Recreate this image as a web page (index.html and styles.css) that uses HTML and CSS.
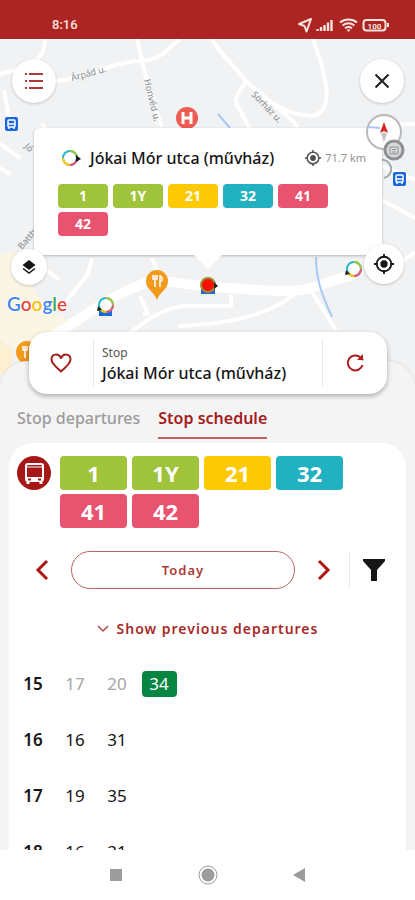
FILE: index.html
```html
<!DOCTYPE html>
<html lang="en">
<head>
    <meta charset="UTF-8">
    <meta name="viewport" content="width=device-width, initial-scale=1.0">
    <title>Stop schedule</title>
    <link rel="stylesheet" href="styles.css">
</head>
<body>
    <header class="status-bar">
        <span class="clock">8:16</span>
        <svg class="status-icons" width="94" height="16" viewBox="0 0 94 16" fill="none" stroke="#fbe3df" stroke-width="2">
            <path d="M14 2L2 7l5.500 2 2 5.500z" stroke-linejoin="round"/>
            <path d="M20.500 14v-2M24 14v-4M27.500 14V8M31 14V5.500M34.500 14V3" stroke-width="2.400"/>
            <path d="M43 5.500c5-4 12-4 17 0M45.500 8.500c4-3 8-3 12 0M48 11.200c2-1.500 5-1.500 7 0"/>
            <path d="M49.500 12.500h4L51.500 15z" fill="#fbe3df" stroke="none"/>
            <rect x="66.500" y="3" width="22" height="10.500" rx="3"/>
            <path d="M91 6v4"/>
            <text class="battery-text" x="77.500" y="11.500" text-anchor="middle">100</text>
        </svg>
    </header>

    <main class="app">
        <section class="map">
            <svg class="map-tiles" viewBox="0 39 415 350" preserveAspectRatio="xMidYMid slice">
                <rect y="39" width="415" height="350" fill="#f0f2f4"/>
                <path d="M0 254l14-3 14 30 22 32 24 8-34 30-8 10-32-22z" fill="#fbf6e3"/>
                <path d="M0 339l14 12-4 20-10 4z" fill="#fdf0d2"/>
                <!-- streets -->
                <g fill="none" stroke="#fff" stroke-width="4" stroke-linejoin="round">
                    <path d="M45 39c0 14-5 18-14 27L0 74M42 124l10 16M4 90l6 34"/>
                    <path d="M56 81c30-2 54-20 92-21 16-3 20-12 32-21M137 39l10 42 15 46"/>
                    <path d="M212 39c10 18 22 26 34 42 16 18 35 25 52 46M246 81c-8 14-12 15-9 24l13 24"/>
                    <path d="M246 81c22 20 36 33 66 35 18-3 16-26 12-40-3-18-7-24-11-37"/>
                    <path d="M0 144l20 14M0 168l10 6M382 125l33-1M382 166l33 14M382 200l33 18"/>
                    <path d="M394 268l21-16M42 266l17 14M92 258l-4 16-24 30M152 258l5 12"/>
                    <path d="M140 296l8 18h-5M129 334c20-17 40-29 60-28h42V294M178 326c50-2 90-10 118-33M312 292l24 38"/>
                    <path d="M42 343l28-18c30-20 52-34 76-42 22-4 36 2 60 3 30 3 60 5 88 5 26-2 35-12 60-16" stroke-width="10"/>
                </g>
                <path d="M218 114l12 14M316 257c0 18 3 32 16 60" fill="none" stroke="#a9c8f5" stroke-width="2"/>
                <g class="street-name">
                    <text x="72" y="81" transform="rotate(-15 72 81)">Árpád u.</text>
                    <text x="144" y="80" transform="rotate(76 144 80)">Honvéd u.</text>
                    <text x="251" y="95" transform="rotate(46 251 95)">Sörház u.</text>
                    <text x="22" y="250" transform="rotate(-50 22 250)">Batthyány</text>
                    <text x="24" y="147" transform="rotate(45 24 147)">Jó</text>
                </g>
                <!-- places -->
                <circle cx="187" cy="118" r="11" fill="#ee5c54"/>
                <path d="M183 112v12M191 112v12M183 118h8" stroke="#fff" stroke-width="3"/>
                <g id="bus-pin">
                    <rect x="5" y="117" width="13" height="14" rx="2" fill="#1a66dc"/>
                    <rect x="8" y="120" width="7" height="7" rx="1" fill="none" stroke="#fff" stroke-width="1.500"/>
                    <path d="M8 124h7M9 127v2M14 127v2" stroke="#fff" stroke-width="1.500"/>
                </g>
                <use href="#bus-pin" x="388" y="55"/>
                <g id="food-pin">
                    <path d="M157 300c-3-9-11-10-11-19a11 11 0 0 1 22 0c0 9-8 10-11 19z" fill="#f29a1c"/>
                    <path d="M153 275v4h4v-4M155 275v12M160 275v12M160 276c3 1 3 5 0 6" fill="none" stroke="#fff" stroke-width="1.500"/>
                </g>
                <use href="#food-pin" x="-130" y="71"/>
                <!-- stops -->
                <path d="M99 307h13v9H99z" fill="#1a66dc"/>
                <g id="stop-ring" fill="none" stroke-width="2">
                    <circle cx="106" cy="305" r="7" fill="#fff" stroke="#2bb5c8"/>
                    <path d="M106 298a7 7 0 0 1 7 7" stroke="#a4c639"/>
                    <path d="M113 305a7 7 0 0 1-7 7" stroke="#ec5574"/>
                    <path d="M106 312a7 7 0 0 1-6-3.500" stroke="#fdc800"/>
                    <path d="M97 311l1-5 4 4z" fill="#222" stroke="none"/>
                </g>
                <use href="#stop-ring" x="248" y="-36"/>
                <path d="M201 286h14v8h-14z" fill="#1a66dc"/>
                <circle cx="208" cy="285" r="7" fill="#f51008" stroke="#a28c28" stroke-width="2"/>
                <path d="M214 282l4 4-4 3z" fill="#222"/>
                <path d="M380 160a9 9 0 0 1 4 18" fill="none" stroke="#a5a8ab" stroke-width="2"/>
                <text class="google" x="7" y="311"><tspan fill="#4285f4">G</tspan><tspan fill="#ea4335">o</tspan><tspan fill="#fbbc05">o</tspan><tspan fill="#4285f4">g</tspan><tspan fill="#34a853">l</tspan><tspan fill="#ea4335">e</tspan></text>
            </svg>

            <div class="popup">
                <div class="popup-title">
                    <svg width="20" height="18" viewBox="0 0 20 18" fill="none" stroke-width="2">
                        <circle cx="8" cy="9" r="7" stroke="#2bb5c8"/>
                        <path d="M8 2a7 7 0 0 1 7 7" stroke="#a4c639"/>
                        <path d="M15 9a7 7 0 0 1-7 7" stroke="#ec5574"/>
                        <path d="M8 16a7 7 0 0 1-7-7" stroke="#fdc800"/>
                        <path d="M14 6l5 4-5 3z" fill="#1b1b1b"/>
                    </svg>
                    <h2 class="stop-name">Jókai Mór utca (művház)</h2>
                    <span class="distance">
                        <svg width="16" height="16" viewBox="0 0 22 22" opacity=".75"><use href="#locate"/></svg>
                        71.7 km
                    </span>
                </div>
                <div class="lines">
                    <span class="line green">1</span>
                    <span class="line green">1Y</span>
                    <span class="line yellow">21</span>
                    <span class="line teal">32</span>
                    <span class="line pink">41</span>
                    <span class="line pink">42</span>
                </div>
            </div>

            <button class="map-btn list-btn" aria-label="List">
                <svg width="20" height="18" viewBox="0 0 20 18" stroke="#b03a38" stroke-width="2"><path d="M5 2h14M5 9h14M5 16h14M1 2h2M1 9h2M1 16h2"/></svg>
            </button>
            <button class="map-btn close-btn" aria-label="Close">
                <svg width="16" height="16" viewBox="0 0 16 16" stroke="#1c1c1c" stroke-width="2"><path d="M1.500 1.500l13 13M14.500 1.500l-13 13"/></svg>
            </button>
            <button class="compass-btn" aria-label="Compass">
                <svg width="40" height="48" viewBox="0 0 40 48">
                    <circle cx="18" cy="18" r="17" fill="#fff" fill-opacity=".85" stroke="#b8babc" stroke-width="2"/>
                    <path d="M3 13l11 1" stroke="#a9c8f5" stroke-width="2"/>
                    <path d="M14 19l4-11 4 11-4-2z" fill="#d8231f"/>
                    <path d="M15 20l3-2 3 2-3 8z" fill="#c4c4c4"/>
                    <circle cx="28" cy="36" r="9" fill="#d9dadb" stroke="#8f9092" stroke-width="3"/>
                    <path d="M24 33h8v7h-8zM26 35.500h4M26 38h4" fill="none" stroke="#8f9092"/>
                </svg>
            </button>
            <button class="map-btn small layers-btn" aria-label="Layers">
                <svg width="14" height="14" viewBox="0 0 14 14"><path d="M7 0l6.500 5L7 10 .5 5z" fill="#161616"/><path d="M1 8.500L7 13l6-4.500" fill="none" stroke="#161616" stroke-width="1.500"/></svg>
            </button>
            <button class="map-btn locate-btn" aria-label="My location">
                <svg width="20" height="20" viewBox="0 0 22 22"><g id="locate" fill="none" stroke="#161616" stroke-width="2"><circle cx="11" cy="11" r="8"/><circle cx="11" cy="11" r="3" fill="#161616"/><path d="M11 0v4M11 18v4M0 11h4M18 11h4"/></g></svg>
            </button>
        </section>

        <section class="sheet">
            <div class="stop-card">
                <button class="card-btn" aria-label="Add to favourites">
                    <svg width="22" height="20" viewBox="0 0 22 20" fill="none" stroke="#a3201d" stroke-width="2"><path d="M11 18.500C6 14 1.500 10.500 1.500 6.500c0-6 7-6.500 9.500-1.500 2.500-5 9.500-4.500 9.500 1.500 0 4-4.500 7.500-9.500 12z" stroke-linejoin="round"/></svg>
                </button>
                <div class="card-text">
                    <span class="card-label">Stop</span>
                    <h1 class="stop-name">Jókai Mór utca (művház)</h1>
                </div>
                <button class="card-btn" aria-label="Refresh">
                    <svg width="20" height="20" viewBox="0 0 20 20" fill="none" stroke="#b01c1c" stroke-width="2"><path d="M17.500 12a7.500 7.500 0 1 1-2-7.500L18 7"/><path d="M12 7h6V1z" fill="#b01c1c" stroke="none"/></svg>
                </button>
            </div>

            <nav class="tabs">
                <a class="tab" href="#departures">Stop departures</a>
                <a class="tab active" href="#schedule">Stop schedule</a>
            </nav>

            <div class="panel" id="schedule">
                <div class="route-row">
                    <svg class="bus-icon" width="34" height="34" viewBox="0 0 34 34">
                        <circle cx="17" cy="17" r="17" fill="#a51816"/>
                        <rect x="9" y="8" width="17" height="17" rx="2" fill="none" stroke="#fff" stroke-width="2"/>
                        <path d="M9 21h17v4H9z" fill="#fff"/>
                        <path d="M9 11h17" stroke="#fff"/>
                        <path d="M11 26v2M24 26v2" stroke="#fff" stroke-width="3"/>
                        <path d="M11 23.500h3M21 23.500h3" stroke="#a51816" stroke-width="2"/>
                    </svg>
                    <div class="lines large">
                        <span class="line green">1</span>
                        <span class="line green">1Y</span>
                        <span class="line yellow">21</span>
                        <span class="line teal">32</span>
                        <span class="line pink">41</span>
                        <span class="line pink">42</span>
                    </div>
                </div>

                <div class="day-row">
                    <button class="icon-btn" aria-label="Previous day">
                        <svg width="14" height="22" viewBox="0 0 14 22" fill="none" stroke="#b01512" stroke-width="3"><path d="M12 2L3 11l9 9"/></svg>
                    </button>
                    <button class="day-btn">Today</button>
                    <button class="icon-btn" aria-label="Next day">
                        <svg width="14" height="22" viewBox="0 0 14 22" fill="none" stroke="#b01512" stroke-width="3"><path d="M2 2l9 9-9 9"/></svg>
                    </button>
                    <button class="filter-btn" aria-label="Filter">
                        <svg width="22" height="22" viewBox="0 0 22 22"><path d="M0 0h22v2l-8 9v11H8V11L0 2z" fill="#161616"/></svg>
                    </button>
                </div>

                <button class="previous-btn">
                    <svg width="12" height="8" viewBox="0 0 12 8" fill="none" stroke="#b5494a" stroke-width="1.500"><path d="M1 1l5 5 5-5"/></svg>
                    Show previous departures
                </button>

                <table class="schedule">
                    <tr><th scope="row">15</th><td class="past">17</td><td class="past">20</td><td><span class="next">34</span></td></tr>
                    <tr><th scope="row">16</th><td>16</td><td>31</td></tr>
                    <tr><th scope="row">17</th><td>19</td><td>35</td></tr>
                    <tr><th scope="row">18</th><td>16</td><td>31</td></tr>
                </table>
            </div>
        </section>
    </main>

    <footer class="system-nav">
        <button aria-label="Recent apps"><svg width="20" height="20" viewBox="0 0 20 20"><path d="M4 4h12v12H4z" fill="#9c9c9c"/></svg></button>
        <button aria-label="Home"><svg width="20" height="20" viewBox="0 0 20 20"><circle cx="10" cy="10" r="9" fill="none" stroke="#9c9c9c"/><circle cx="10" cy="10" r="6.500" fill="#9c9c9c"/></svg></button>
        <button aria-label="Back"><svg width="20" height="20" viewBox="0 0 20 20"><path d="M15 3v14L3 10z" fill="#9c9c9c"/></svg></button>
    </footer>
</body>
</html>
```
FILE: styles.css
```css
* {
    box-sizing: border-box;
}

body {
    margin: 0;
    height: 100vh;
    display: flex;
    flex-direction: column;
    overflow: hidden;
    background-color: #fff;
    color: #161616;
    font-family: 'Noto Sans', sans-serif;
}

button {
    padding: 0;
    border: none;
    background: none;
    font-family: inherit;
    cursor: pointer;
    display: flex;
    align-items: center;
    justify-content: center;
}

h1, h2 {
    margin: 0;
}

svg {
    display: block;
    flex-shrink: 0;
}

.status-bar {
    display: flex;
    justify-content: space-between;
    align-items: flex-end;
    padding: 17px 24px 6px 52px;
    background-color: #ad2522;
    color: #fbe3df;
}

.clock {
    font: 500 13px/16px Roboto, sans-serif;
}

.battery-text {
    font: 700 8px Roboto, sans-serif;
    fill: #fbe3df;
    stroke: none;
}

.app {
    flex: 1;
    min-height: 0;
    display: flex;
    flex-direction: column;
    overflow: hidden;
}

.map {
    position: relative;
    flex-shrink: 0;
    height: 350px;
    padding: 89px 33px 0 34px;
}

.map-tiles {
    position: absolute;
    top: 0;
    left: 0;
    width: 100%;
    height: 100%;
}

.street-name {
    font-size: 9px;
    fill: #85898d;
}

.google {
    font: 600 19px Lato, sans-serif;
    stroke: #fff;
    stroke-width: 2px;
    paint-order: stroke;
}

.map-btn {
    position: absolute;
    width: 44px;
    height: 44px;
    border-radius: 50%;
    background-color: #fff;
    box-shadow: 0 1px 3px rgba(0, 0, 0, 0.2);
}

.map-btn.small {
    width: 36px;
    height: 36px;
}

.list-btn {
    top: 20px;
    left: 12px;
}

.close-btn {
    top: 20px;
    right: 11px;
}

.compass-btn {
    position: absolute;
    top: 75px;
    right: 9px;
}

.layers-btn {
    top: 210px;
    left: 11px;
}

.map-btn.locate-btn {
    top: 205px;
    right: 11px;
    width: 40px;
    height: 40px;
}

.popup {
    position: relative;
    padding: 20px 16px 19px 24px;
    border-radius: 6px;
    background-color: #fff;
    box-shadow: 0 1px 3px rgba(0, 0, 0, 0.25);
}

/* arrow that points at the selected stop */
.popup::after {
    content: '';
    position: absolute;
    top: 100%;
    left: 50%;
    margin-left: -14px;
    border: 14px solid transparent;
    border-top-color: #fff;
    border-bottom: none;
}

.popup-title {
    display: flex;
    align-items: center;
    gap: 8px;
    padding-left: 4px;
    margin-bottom: 16px;
}

.stop-name {
    font-size: 16px;
    line-height: 20px;
    font-weight: 500;
    white-space: nowrap;
}

.distance {
    margin-left: auto;
    display: flex;
    align-items: center;
    gap: 4px;
    color: #929292;
    font-size: 11px;
    line-height: 16px;
    white-space: nowrap;
}

.lines {
    display: flex;
    flex-wrap: wrap;
    gap: 4px 5px;
}

.line {
    width: 50px;
    border-radius: 4px;
    color: #fff;
    font-size: 14px;
    line-height: 24px;
    font-weight: 700;
    text-align: center;
}

.lines.large .line {
    width: 67px;
    font-size: 22px;
    line-height: 34px;
}

.green { background-color: #9fc43c; }
.yellow { background-color: #fdc904; }
.teal { background-color: #22b1c1; }
.pink { background-color: #e8536f; }

.sheet {
    position: relative;
    flex: 1;
    min-height: 0;
    display: flex;
    flex-direction: column;
    margin-top: -28px;
    padding: 0 9px;
    border-radius: 28px 28px 0 0;
    background-color: #f4f4f4;
    box-shadow: 0 -1px 3px rgba(0, 0, 0, 0.08);
}

.stop-card {
    display: flex;
    align-items: stretch;
    flex-shrink: 0;
    margin: -29px 19px 0 20px;
    padding: 8px 0;
    border-radius: 18px;
    background-color: #fff;
    box-shadow: 0 2px 5px rgba(0, 0, 0, 0.3);
}

.card-btn {
    width: 64px;
}

.card-text {
    flex: 1;
    padding: 3px 8px;
    border: solid #e6e6e6;
    border-width: 0 1px;
}

.card-label {
    display: block;
    color: #555;
    font-size: 12px;
    line-height: 20px;
}

.tabs {
    display: flex;
    gap: 18px;
    padding: 13px 8px 4px;
}

.tab {
    padding-bottom: 7px;
    border-bottom: 2px solid transparent;
    color: #9b9b9b;
    font-size: 16px;
    line-height: 23px;
    font-weight: 500;
    text-decoration: none;
    white-space: nowrap;
}

.tab.active {
    border-color: #c0605f;
    color: #a31d1d;
    font-weight: 600;
}

.panel {
    flex: 1;
    min-height: 0;
    overflow: hidden;
    padding: 13px 8px 0;
    border-radius: 24px 24px 0 0;
    background-color: #fff;
}

.route-row {
    display: flex;
    align-items: flex-start;
    gap: 9px;
}

.day-row {
    display: flex;
    align-items: center;
    margin-top: 23px;
}

.icon-btn {
    width: 50px;
    height: 38px;
}

.day-btn {
    flex: 1;
    height: 38px;
    margin: 0 4px;
    border: 1px solid #b96565;
    border-radius: 19px;
    color: #a93a3a;
    font-size: 13px;
    font-weight: 600;
    letter-spacing: 1px;
}

.filter-btn {
    width: 49px;
    height: 34px;
    border-left: 1px solid #e6e6e6;
}

.previous-btn {
    gap: 8px;
    margin: 29px auto 0;
    color: #a82a2a;
    font-size: 14px;
    line-height: 22px;
    font-weight: 600;
    letter-spacing: 1px;
}

.schedule {
    margin-top: 16px;
    margin-left: -5px;
    border-collapse: collapse;
    font-size: 17px;
    line-height: 26px;
}

.schedule th,
.schedule td {
    width: 42px;
    height: 56px;
    padding: 0;
    text-align: center;
}

.schedule th {
    font-weight: 600;
}

.schedule .past {
    color: #a5a5a5;
}

.next {
    display: inline-block;
    width: 35px;
    border-radius: 4px;
    background-color: #088443;
    color: #fff;
}

.system-nav {
    display: flex;
    justify-content: center;
    gap: 72px;
    height: 50px;
}

.system-nav button {
    width: 20px;
}
```
